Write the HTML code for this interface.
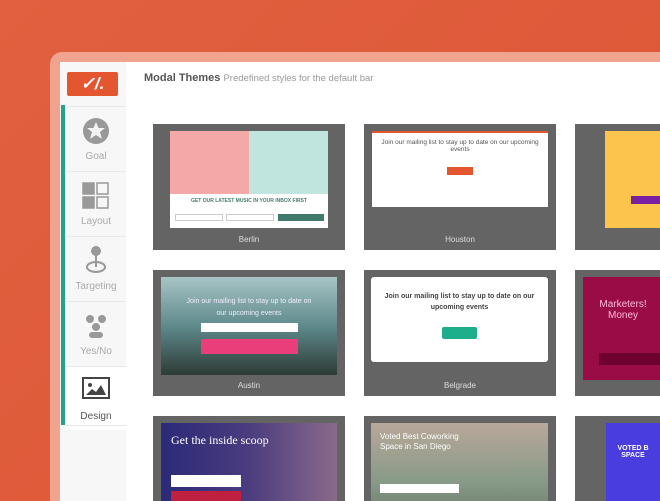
<!DOCTYPE html><html><head><style>
*{margin:0;padding:0;box-sizing:border-box}
html,body{width:660px;height:501px;overflow:hidden}
body{background:linear-gradient(135deg,#e0603f,#de5535);font-family:"Liberation Sans",sans-serif;position:relative}
.frame{position:absolute;left:50px;top:52px;width:610px;height:449px;background:#f0a38f;border-radius:12px 0 0 0}
.panel{position:absolute;left:60px;top:62px;width:600px;height:439px;background:#fff}
.side{position:absolute;left:60px;top:62px;width:66px;height:439px;background:#f7f7f7}
.teal{position:absolute;left:61px;top:105px;width:4px;height:320px;background:#27a08a}
.logo{position:absolute;left:67px;top:72px;width:51px;height:24px;background:#e4562f;border-radius:2px;color:#fff;font-weight:bold;font-size:17px;text-align:center;line-height:24px;font-style:italic}
.item{position:absolute;left:66px;width:60px;height:64px;border-top:1px solid #e8e8e8;color:#aaa;font-size:10px;text-align:center}
.item span{position:absolute;left:0;right:0;bottom:8px}
.title{position:absolute;left:144px;top:72px;font-size:11px;color:#555;font-weight:bold}
.title i{font-style:normal;font-weight:normal;color:#999;font-size:9.5px}
.card{position:absolute;width:192px;height:126px;background:#646464;overflow:hidden}
.card .lab{position:absolute;left:0;right:0;bottom:6px;text-align:center;color:#ddd;font-size:8px}
.pv{position:absolute;left:17px;top:7px;width:158px;height:97px;overflow:hidden}
.r3{height:85px}
</style></head><body>
<div class="frame"></div><div class="panel"></div><div class="side"></div><div class="teal"></div>
<div class="logo">✓/.</div>
<div class="item" style="top:106px"><svg width="28" height="28" style="position:absolute;left:16px;top:10px"><circle cx="14" cy="14" r="13" fill="#999"/><polygon points="14,5 16.5,11 23,11 18,15 20,22 14,18 8,22 10,15 5,11 11.5,11" fill="#f2f2f2"/></svg><span>Goal</span></div>
<div class="item" style="top:171px"><svg width="28" height="28" style="position:absolute;left:16px;top:10px" fill="none" stroke="#999" stroke-width="1.5"><rect x="1" y="1" width="11" height="11" fill="#999"/><rect x="15" y="1" width="11" height="11"/><rect x="1" y="15" width="11" height="11" fill="#999"/><rect x="15" y="15" width="11" height="11"/></svg><span>Layout</span></div>
<div class="item" style="top:236px"><svg width="28" height="30" style="position:absolute;left:16px;top:8px" fill="none" stroke="#999" stroke-width="2"><circle cx="14" cy="6" r="4" fill="#999"/><line x1="14" y1="10" x2="14" y2="22"/><ellipse cx="14" cy="22" rx="9" ry="5"/></svg><span>Targeting</span></div>
<div class="item" style="top:301px"><svg width="28" height="28" style="position:absolute;left:16px;top:10px" fill="#999"><circle cx="8" cy="7" r="4"/><circle cx="20" cy="7" r="4"/><circle cx="14" cy="15" r="4"/><rect x="7" y="20" width="14" height="6" rx="3"/></svg><span>Yes/No</span></div>
<div class="item" style="top:366px;background:#fff;color:#555"><svg width="28" height="24" style="position:absolute;left:16px;top:10px"><rect x="1" y="1" width="26" height="20" fill="none" stroke="#444" stroke-width="2"/><circle cx="8" cy="8" r="2" fill="#444"/><polygon points="4,18 10,12 14,15 19,8 24,18" fill="#444"/></svg><span>Design</span></div>
<div class="item" style="top:425px;height:76px"></div>
<div class="title">Modal Themes <i>Predefined styles for the default bar</i></div>

<div class="card" style="left:153px;top:124px"><div class="pv" style="background:#fff"><div style="height:63px;background:linear-gradient(90deg,#f4a9a8 50%,#bfe5de 50%)"></div><div style="text-align:center;font-size:5px;font-weight:bold;color:#4a7a70;margin-top:4px">GET OUR LATEST MUSIC IN YOUR INBOX FIRST</div><div style="position:absolute;left:5px;top:83px;width:48px;height:7px;border:1px solid #ccc"></div><div style="position:absolute;left:56px;top:83px;width:48px;height:7px;border:1px solid #ccc"></div><div style="position:absolute;left:108px;top:83px;width:46px;height:7px;background:#3f7a6c"></div></div><div class="lab">Berlin</div></div>
<div class="card" style="left:364px;top:124px"><div class="pv" style="left:8px;width:176px;height:76px;background:#fff;border-top:2px solid #e4562f;text-align:center;font-size:6.5px;color:#555;padding-top:6px">Join our mailing list to stay up to date on our upcoming events<div style="width:26px;height:8px;background:#e4562f;margin:14px auto 0"></div></div><div class="lab">Houston</div></div>
<div class="card" style="left:575px;top:124px;width:85px"><div class="pv" style="left:30px;width:60px;height:97px;background:#fcc44c"><div style="position:absolute;left:26px;top:65px;width:40px;height:8px;background:#7a1fa2"></div></div></div>

<div class="card" style="left:153px;top:270px"><div class="pv" style="left:8px;width:176px;height:98px;background:linear-gradient(#a8c4c4,#5f8a8c 50%,#2c3b36);text-align:center;color:#eef;font-size:7px;padding-top:19px;line-height:12px">Join our mailing list to stay up to date on<br>our upcoming events<div style="width:97px;height:9px;background:#fff;margin:3px auto 0"></div><div style="width:97px;height:15px;background:#e93e7a;margin:7px auto 0"></div></div><div class="lab">Austin</div></div>
<div class="card" style="left:364px;top:270px"><div class="pv" style="left:7px;width:177px;height:85px;background:#fff;border-radius:3px;text-align:center;font-size:7px;font-weight:bold;color:#444;padding-top:14px;line-height:11px">Join our mailing list to stay up to date on our<br>upcoming events<div style="width:35px;height:12px;background:#1fae8c;border-radius:2px;margin:14px auto 0"></div></div><div class="lab">Belgrade</div></div>
<div class="card" style="left:575px;top:270px;width:85px"><div class="pv" style="left:8px;width:80px;height:103px;background:#9a0c44;font-size:10px;text-align:center;padding-top:22px;color:#fbd">Marketers!<br>Money<div style="position:absolute;left:16px;top:76px;width:70px;height:12px;background:#6e0030"></div></div></div>

<div class="card r3" style="left:153px;top:416px"><div class="pv" style="left:8px;width:176px;top:7px;background:linear-gradient(90deg,#2b2a78,#4b3c7e 50%,#8a6a8a)"><div style="position:absolute;left:10px;top:10px;color:#fff;font-family:'Liberation Serif',serif;font-size:12px">Get the inside scoop</div><div style="position:absolute;left:10px;top:52px;width:70px;height:12px;background:#fff"></div><div style="position:absolute;left:10px;top:68px;width:70px;height:12px;background:#c02040"></div></div></div>
<div class="card r3" style="left:364px;top:416px"><div class="pv" style="left:7px;width:177px;top:7px;background:linear-gradient(#b8a89a,#889a88 60%,#6a7a6a)"><div style="position:absolute;left:9px;top:9px;color:#fff;font-size:8px;line-height:10px">Voted Best Coworking<br>Space in San Diego</div><div style="position:absolute;left:9px;top:61px;width:79px;height:9px;background:#fff"></div></div></div>
<div class="card r3" style="left:575px;top:416px;width:85px"><div class="pv" style="left:31px;width:54px;top:7px;background:#4a3de0;color:#fff;font-size:7px;font-weight:bold;text-align:center;padding-top:22px">VOTED B<br>SPACE</div></div>
</body></html>
